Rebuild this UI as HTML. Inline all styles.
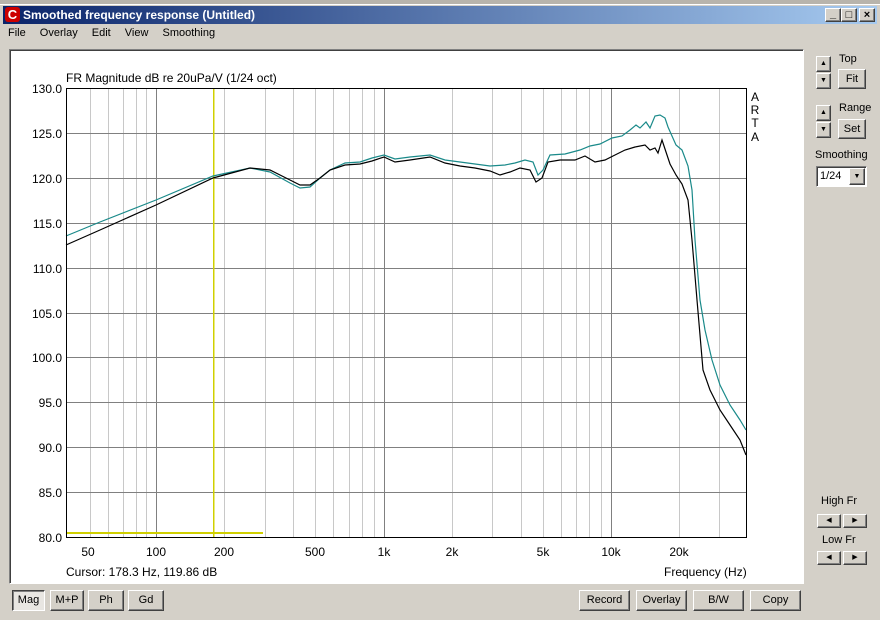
<!DOCTYPE html>
<html><head><style>
*{margin:0;padding:0;box-sizing:border-box}
body{width:880px;height:620px;background:#d4d0c8;font-family:"Liberation Sans",sans-serif;font-size:11px;position:relative;overflow:hidden}
.a{position:absolute}
.btn{position:absolute;background:#d4d0c8;border:1px solid;border-color:#fff #404040 #404040 #fff;box-shadow:inset -1px -1px 0 #808080;text-align:center;font-size:11px;color:#000}
.menu span{margin-right:11px}
</style></head><body>
<div class="a" style="left:0;top:0;width:880px;height:5px;background:#b8b4ac"></div>
<div class="a" style="left:0;top:4px;width:880px;height:616px;background:#d4d0c8;border-top:1px solid #fff"></div>
<div class="a" style="left:3px;top:6px;width:874px;height:18px;background:linear-gradient(90deg,#0a246a,#a6caf0)"></div>
<div class="a" style="left:5px;top:7px;width:15px;height:15px;background:#c00;border-radius:3px;color:#fff;font-weight:bold;font-size:13px;line-height:15px;text-align:center">C</div>
<div class="a" style="left:23px;top:8px;color:#fff;font-weight:bold;font-size:12px">Smoothed frequency response (Untitled)</div>
<div class="btn" style="left:825px;top:8px;width:16px;height:14px;line-height:10px;font-weight:bold">_</div>
<div class="btn" style="left:841px;top:8px;width:16px;height:14px;line-height:12px">□</div>
<div class="btn" style="left:859px;top:8px;width:16px;height:14px;line-height:12px;font-weight:bold">×</div>
<div class="a menu" style="left:8px;top:27px;font-size:11px"><span>File</span> <span>Overlay</span> <span>Edit</span> <span>View</span> <span>Smoothing</span></div>
<div class="a" style="left:9px;top:49px;width:795px;height:535px;background:#fff;border:1px solid;border-color:#808080 #fff #fff #808080;box-shadow:inset 1px 1px 0 #404040"></div>
<svg class="a" style="left:0;top:0" width="880" height="620" font-family="Liberation Sans" font-size="12">
<text x="66" y="82">FR Magnitude dB re 20uPa/V (1/24 oct)</text>
<g stroke="#c8c8c8" stroke-width="1">
<line x1="90.5" y1="88" x2="90.5" y2="537"/><line x1="108.5" y1="88" x2="108.5" y2="537"/><line x1="123.5" y1="88" x2="123.5" y2="537"/><line x1="136.5" y1="88" x2="136.5" y2="537"/><line x1="146.5" y1="88" x2="146.5" y2="537"/>
<line x1="224.5" y1="88" x2="224.5" y2="537"/><line x1="265.5" y1="88" x2="265.5" y2="537"/><line x1="293.5" y1="88" x2="293.5" y2="537"/><line x1="315.5" y1="88" x2="315.5" y2="537"/><line x1="333.5" y1="88" x2="333.5" y2="537"/><line x1="349.5" y1="88" x2="349.5" y2="537"/><line x1="362.5" y1="88" x2="362.5" y2="537"/><line x1="374.5" y1="88" x2="374.5" y2="537"/>
<line x1="452.5" y1="88" x2="452.5" y2="537"/><line x1="492.5" y1="88" x2="492.5" y2="537"/><line x1="521.5" y1="88" x2="521.5" y2="537"/><line x1="543.5" y1="88" x2="543.5" y2="537"/><line x1="561.5" y1="88" x2="561.5" y2="537"/><line x1="576.5" y1="88" x2="576.5" y2="537"/><line x1="589.5" y1="88" x2="589.5" y2="537"/><line x1="601.5" y1="88" x2="601.5" y2="537"/>
<line x1="679.5" y1="88" x2="679.5" y2="537"/><line x1="719.5" y1="88" x2="719.5" y2="537"/>
</g>
<g stroke="#808080" stroke-width="1">
<line x1="156.5" y1="88" x2="156.5" y2="537"/><line x1="384.5" y1="88" x2="384.5" y2="537"/><line x1="611.5" y1="88" x2="611.5" y2="537"/>
<line x1="66" y1="133.5" x2="746" y2="133.5"/><line x1="66" y1="178.5" x2="746" y2="178.5"/><line x1="66" y1="223.5" x2="746" y2="223.5"/><line x1="66" y1="268.5" x2="746" y2="268.5"/><line x1="66" y1="313.5" x2="746" y2="313.5"/><line x1="66" y1="357.5" x2="746" y2="357.5"/><line x1="66" y1="402.5" x2="746" y2="402.5"/><line x1="66" y1="447.5" x2="746" y2="447.5"/><line x1="66" y1="492.5" x2="746" y2="492.5"/>
</g>
<rect x="213" y="88" width="1.5" height="449" fill="#d0d000"/>
<rect x="66" y="532" width="197" height="2" fill="#d0d000"/>
<polyline fill="none" stroke="#1a8a8a" stroke-width="1.2" points="66,236 100,222 156,200 213,176 250,168 270,172 290,183 300,188 310,187 320,178 330,170 345,163 360,162 372,158 384,155 395,159 410,157 430,155 445,160 460,162 475,164 490,166 505,165 515,163 525,160 533,162 538,175 543,170 550,155 565,154 580,150 590,146 600,144 612,138 622,136 630,130 636,125 640,128 646,122 650,128 655,116 660,115 665,118 668,127 672,136 676,145 682,150 688,166 692,190 695,240 700,300 705,330 712,360 720,385 730,405 740,420 746,430"/>
<polyline fill="none" stroke="#000" stroke-width="1.2" points="66,245 100,230 156,205 213,178 250,168 270,170 290,180 300,185 310,185 320,178 330,170 345,165 360,164 372,161 384,157 395,162 410,160 430,157 445,163 460,166 475,168 490,171 500,175 510,172 520,168 530,170 536,182 542,178 548,162 560,160 575,160 585,156 595,162 605,160 615,155 625,150 635,147 645,145 650,150 655,148 658,153 662,140 666,152 670,164 676,175 682,184 688,200 692,240 697,300 703,370 710,390 720,410 730,425 740,440 746,455"/>
<rect x="66.5" y="88.5" width="680" height="449" fill="none" stroke="#000"/>
<g font-size="12" text-anchor="end">
<text x="62" y="93">130.0</text><text x="62" y="138">125.0</text><text x="62" y="183">120.0</text><text x="62" y="228">115.0</text><text x="62" y="273">110.0</text><text x="62" y="318">105.0</text><text x="62" y="362">100.0</text><text x="62" y="407">95.0</text><text x="62" y="452">90.0</text><text x="62" y="497">85.0</text><text x="62" y="542">80.0</text>
</g>
<g font-size="12" text-anchor="middle">
<text x="88" y="556">50</text><text x="156" y="556">100</text><text x="224" y="556">200</text><text x="315" y="556">500</text><text x="384" y="556">1k</text><text x="452" y="556">2k</text><text x="543" y="556">5k</text><text x="611" y="556">10k</text><text x="679" y="556">20k</text>
<text x="755" y="101">A</text><text x="755" y="114">R</text><text x="755" y="127">T</text><text x="755" y="141">A</text>
</g>
<text x="66" y="576">Cursor: 178.3 Hz, 119.86 dB</text>
<text x="664" y="576">Frequency (Hz)</text>
</svg>
<div class="btn" style="left:12px;top:590px;width:33px;height:21px;line-height:19px;background:#e8e6e2;border-color:#404040 #fff #fff #404040;box-shadow:inset 1px 1px 0 #808080">Mag</div>
<div class="btn" style="left:50px;top:590px;width:34px;height:21px;line-height:19px">M+P</div>
<div class="btn" style="left:88px;top:590px;width:36px;height:21px;line-height:19px">Ph</div>
<div class="btn" style="left:128px;top:590px;width:36px;height:21px;line-height:19px">Gd</div>
<div class="btn" style="left:579px;top:590px;width:51px;height:21px;line-height:19px">Record</div>
<div class="btn" style="left:636px;top:590px;width:51px;height:21px;line-height:19px">Overlay</div>
<div class="btn" style="left:693px;top:590px;width:51px;height:21px;line-height:19px">B/W</div>
<div class="btn" style="left:750px;top:590px;width:51px;height:21px;line-height:19px">Copy</div>
<div class="a" style="left:839px;top:53px">Top</div>
<div class="btn" style="left:816px;top:56px;width:15px;height:16px;font-size:7px;line-height:14px">▲</div>
<div class="btn" style="left:816px;top:73px;width:15px;height:16px;font-size:7px;line-height:14px">▼</div>
<div class="btn" style="left:838px;top:69px;width:28px;height:20px;line-height:18px">Fit</div>
<div class="a" style="left:839px;top:102px">Range</div>
<div class="btn" style="left:816px;top:105px;width:15px;height:16px;font-size:7px;line-height:14px">▲</div>
<div class="btn" style="left:816px;top:122px;width:15px;height:16px;font-size:7px;line-height:14px">▼</div>
<div class="btn" style="left:838px;top:119px;width:28px;height:20px;line-height:18px">Set</div>
<div class="a" style="left:815px;top:149px">Smoothing</div>
<div class="a" style="left:816px;top:166px;width:51px;height:21px;background:#fff;border:1px solid;border-color:#808080 #fff #fff #808080;box-shadow:inset 1px 1px 0 #404040;padding:3px 0 0 3px">1/24</div>
<div class="btn" style="left:849px;top:168px;width:16px;height:17px;font-size:7px;line-height:15px">▼</div>
<div class="a" style="left:821px;top:495px">High Fr</div>
<div class="btn" style="left:817px;top:514px;width:24px;height:14px;font-size:7px;line-height:12px">◀</div>
<div class="btn" style="left:843px;top:514px;width:24px;height:14px;font-size:7px;line-height:12px">▶</div>
<div class="a" style="left:822px;top:534px">Low Fr</div>
<div class="btn" style="left:817px;top:551px;width:24px;height:14px;font-size:7px;line-height:12px">◀</div>
<div class="btn" style="left:843px;top:551px;width:24px;height:14px;font-size:7px;line-height:12px">▶</div>
</body></html>
